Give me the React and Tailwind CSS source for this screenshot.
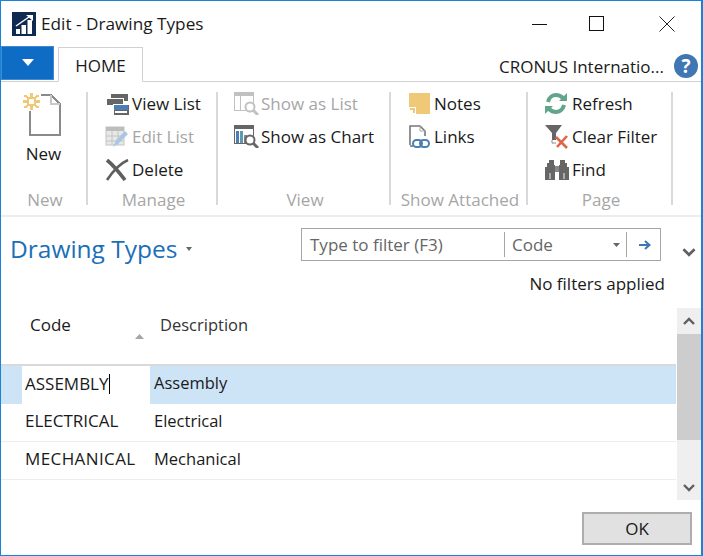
import React from 'react';

const ActionRow = ({ icon, label, disabled, iconWidth = 'w-[27px]' }) => (
    <div className={`h-[33px] flex items-center ${disabled ? 'text-[#a6a6a6]' : 'text-[#1a1a1a]'}`}>
        <span className={`${iconWidth} h-[24px] flex items-center shrink-0`}>{icon}</span>
        <span className="whitespace-nowrap">{label}</span>
    </div>
);

const RibbonGroup = ({ label, width, pad, children }) => (
    <div className="relative flex flex-col h-full shrink-0" style={{ width }}>
        <div className={`h-[102px] pt-[5px] ${pad}`}>{children}</div>
        <div className="h-[31px] text-center text-[#a6a6a6] pl-[1px] leading-[32px] whitespace-nowrap">{label}</div>
        <div className="absolute right-0 top-[10px] h-[113px] w-[2px] bg-[#d9d9d9]" />
    </div>
);

const NewIcon = () => (
    <svg width="42" height="46" viewBox="0 0 42 46" shapeRendering="crispEdges">
        <path d="M9 3H30L39 12V43H9Z" fill="#fff" stroke="#8a8a8a" strokeWidth="2" />
        <path d="M30 3V12H39" fill="none" stroke="#c8c8c8" strokeWidth="2" />
        <rect x="1" y="0" width="19" height="19" fill="#fff" />
        <g fill="#efc878">
            <rect x="9" y="1" width="3" height="5" />
            <rect x="9" y="13" width="3" height="5" />
            <rect x="2" y="8" width="5" height="3" />
            <rect x="14" y="8" width="5" height="3" />
            <path d="M3 3H6V4H7V5H8V7H6V6H5V5H3ZM15 3H18V5H16V6H15V7H13V5H14V4H15ZM6 12H8V14H7V15H6V16H3V14H5V13H6ZM13 12H15V13H16V14H18V16H15V15H14V14H13Z" />
        </g>
        <rect x="7" y="6" width="7" height="7" fill="none" stroke="#efc878" strokeWidth="2" />
    </svg>
);

const ViewListIcon = () => (
    <svg width="24" height="22" viewBox="0 0 24 22" shapeRendering="crispEdges">
        <rect x="6" y="1" width="17" height="7" fill="#666" />
        <rect x="1" y="5" width="17" height="7" fill="#666" stroke="#fff" />
        <rect x="8" y="11" width="16" height="11" fill="#666" stroke="#fff" />
        <rect x="9" y="12" width="14" height="5" fill="#4a7fb5" />
        <rect x="10" y="18" width="12" height="2" fill="#fff" />
    </svg>
);

const EditListIcon = () => (
    <svg width="24" height="22" viewBox="0 0 24 22">
        <rect x="1" y="1" width="18" height="18" fill="#e8e8e8" stroke="#c4c4c4" />
        <rect x="1" y="1" width="18" height="4" fill="#bdbdbd" />
        <path d="M7 5V19M13 5V19M1 10H19M1 15H19" stroke="#c4c4c4" fill="none" />
        <path d="M8 21L11 14L20 5L23 8L14 17Z" fill="#a9c6e3" />
    </svg>
);

const DeleteIcon = () => (
    <svg width="24" height="22" viewBox="0 0 24 22">
        <path d="M2 1C8 6 14 13 20 21" stroke="#5f5f5f" strokeWidth="3.6" fill="none" />
        <path d="M23 1C16 4 8 12 2 21" stroke="#5f5f5f" strokeWidth="2.6" fill="none" />
    </svg>
);

const ChartListIcon = ({ dim }) => (
    <svg width="25" height="23" viewBox="0 0 25 23" shapeRendering="crispEdges" className={dim ? 'opacity-40' : ''}>
        <rect x="0" y="0" width="19" height="18" fill="#fff" stroke="#666" />
        <rect x="0" y="0" width="19" height="4" fill="#666" />
        {dim ? (
            <path d="M6.5 4V18" stroke="#666" fill="none" />
        ) : (
            <g>
                <rect x="2" y="6" width="3" height="12" fill="#4a7fb5" />
                <rect x="6" y="6" width="3" height="12" fill="#5d9bb0" />
                <rect x="10" y="10" width="3" height="8" fill="#888" />
            </g>
        )}
        <circle cx="16" cy="15" r="4.5" fill="#fff" stroke="#666" strokeWidth="2" shapeRendering="auto" />
        <path d="M19 18L24 23" stroke="#666" strokeWidth="3" shapeRendering="auto" />
    </svg>
);

const NotesIcon = () => (
    <svg width="21" height="21" viewBox="0 0 21 21" shapeRendering="crispEdges">
        <path d="M0 0H21V21H7V14H0Z" fill="#efc878" />
        <path d="M1 15H6V20H4V17H1Z" fill="#efc878" />
    </svg>
);

const LinksIcon = () => (
    <svg width="21" height="23" viewBox="0 0 21 23">
        <path d="M1 20V1H11L16 6V11" fill="none" stroke="#777" strokeWidth="1.6" />
        <path d="M1 21H4" stroke="#777" strokeWidth="1.6" />
        <path d="M11 1V6H16" fill="none" stroke="#aaa" />
        <rect x="4" y="15" width="9" height="7" rx="3.5" fill="none" stroke="#4a7fb5" strokeWidth="2" />
        <rect x="11" y="15" width="9" height="7" rx="3.5" fill="none" stroke="#4a7fb5" strokeWidth="2" />
    </svg>
);

const RefreshIcon = () => (
    <svg width="22" height="23" viewBox="0 0 22 23">
        <path d="M3 10C4 5 8 3 11 3C14 3 16 4 18 6" fill="none" stroke="#62a58c" strokeWidth="4" />
        <path d="M14 9H22V1Z" fill="#62a58c" />
        <path d="M19 13C18 18 14 20 11 20C8 20 6 19 4 17" fill="none" stroke="#62a58c" strokeWidth="4" />
        <path d="M8 14H0V22Z" fill="#62a58c" />
    </svg>
);

const ClearFilterIcon = () => (
    <svg width="24" height="24" viewBox="0 0 24 24">
        <path d="M0 0H17L11 8V15H7V8Z" fill="#666" />
        <path d="M7 15V18H11" fill="none" stroke="#888" />
        <path d="M11 12L22 23M22 11L12 22" stroke="#e0664a" strokeWidth="2.6" fill="none" />
    </svg>
);

const FindIcon = () => (
    <svg width="24" height="20" viewBox="0 0 24 20" shapeRendering="crispEdges">
        <path d="M4 0H9V5H10V12H0V7H2V3H4Z" fill="#666" />
        <path d="M15 0H20V3H22V7H24V12H14V5H15Z" fill="#666" />
        <rect x="0" y="11" width="10" height="9" fill="#666" />
        <rect x="14" y="11" width="10" height="9" fill="#666" />
        <rect x="10" y="6" width="4" height="6" fill="#888" />
        <rect x="4" y="13" width="2" height="6" fill="#aaa" />
        <rect x="18" y="13" width="2" height="6" fill="#aaa" />
    </svg>
);

const Logo = () => (
    <svg width="24" height="24" viewBox="0 0 24 24" className="shrink-0">
        <rect width="24" height="24" fill="#0e2a50" />
        <path d="M4 22V17H8V22ZM9.500 22V13H14V22ZM15.500 22V8H20V22Z" fill="#fff" />
        <path d="M4 14L17 5" stroke="#fff" strokeWidth="1.5" />
        <path d="M14 3H21V9Z" fill="#fff" />
    </svg>
);

const Chevron = ({ up, className }) => (
    <svg width="12" height="9" viewBox="0 0 12 9" className={className}>
        <path d={up ? 'M1 7L6 2L11 7' : 'M1 2L6 7L11 2'} fill="none" stroke="#5f5f5f" strokeWidth="2.4" />
    </svg>
);

const Row = ({ code, description, selected, bottomLine, codeClass }) => (
    <div className={`h-[38px] grid grid-cols-[21px_128px_1fr] ${bottomLine ? 'border-b border-[#ededed]' : ''} ${selected ? 'bg-[#cde4f7]' : ''}`}>
        <div />
        <div className={`flex items-center pl-[3px] pb-[3px] whitespace-nowrap ${selected ? 'bg-white' : ''}`}>
            <span className={codeClass}>{code}</span>
            {selected && <span className="w-px h-[20px] bg-black" />}
        </div>
        <div className="flex items-center pl-[4px] pb-[3px] text-[16.500px]">{description}</div>
    </div>
);

export default function App() {
    return (
        <div className="w-[703px] h-[556px] bg-white border border-[#1883d7] border-r-2 overflow-hidden flex flex-col font-['Open_Sans','Noto_Sans',sans-serif] text-[17px] text-[#1a1a1a]">
            {/* title bar */}
            <div className="h-[46px] flex items-center shrink-0 pl-[11px]">
                <Logo />
                <span className="ml-[5px] text-[17.200px] whitespace-nowrap">Edit - Drawing Types</span>
                <div className="ml-auto flex items-center">
                    <svg width="16" height="16" viewBox="0 0 16 16" className="mr-[41px]" shapeRendering="crispEdges">
                        <path d="M0 8H15" stroke="#111" />
                    </svg>
                    <svg width="16" height="16" viewBox="0 0 16 16" className="mr-[54px]" shapeRendering="crispEdges">
                        <rect x="0.5" y="0.5" width="14" height="14" fill="none" stroke="#111" />
                    </svg>
                    <svg width="16" height="16" viewBox="0 0 16 16" className="mr-[26px]">
                        <path d="M0.5 0.5L15.5 15.5M15.5 0.5L0.5 15.5" stroke="#222" />
                    </svg>
                </div>
            </div>

            {/* tab strip */}
            <div className="h-[35px] flex items-end shrink-0 border-b border-[#d0d0d0] relative">
                <div className="w-[53px] h-[34px] mb-[1px] mr-[4px] bg-[#0f6cc4] border border-[#3f8ad2] flex items-center justify-center">
                    <svg width="12" height="8" viewBox="0 0 12 8"><path d="M0 0H12L6 7Z" fill="#fff" /></svg>
                </div>
                <div className="relative -mb-px w-[85px] h-[35px] border border-[#d0d0d0] border-b-white bg-white flex items-center justify-center pt-[2px]">HOME</div>
                <div className="ml-auto mb-[2px] flex items-center pr-[3px]">
                    <span className="whitespace-nowrap">CRONUS Internatio...</span>
                    <span className="ml-[10px] w-[24px] h-[24px] rounded-full bg-[#3f76b4] text-white font-bold text-[19px] flex items-center justify-center leading-none">?</span>
                </div>
            </div>

            {/* ribbon */}
            <div className="h-[135px] flex shrink-0 border-b-2 border-[#ededed]">
                <RibbonGroup label="New" width="87px">
                    <div className="flex flex-col items-center pr-[2px]">
                        <div className="h-[46px] mt-[5px] -ml-[3px]"><NewIcon /></div>
                        <span className="mt-[4px] leading-[24px]">New</span>
                    </div>
                </RibbonGroup>
                <RibbonGroup label="Manage" width="130px" pad="pl-[17px]">
                    <ActionRow icon={<ViewListIcon />} label="View List" />
                    <ActionRow icon={<EditListIcon />} label="Edit List" disabled />
                    <ActionRow icon={<DeleteIcon />} label="Delete" />
                </RibbonGroup>
                <RibbonGroup label="View" width="173px" pad="pl-[16px]">
                    <ActionRow icon={<ChartListIcon dim />} label="Show as List" disabled />
                    <ActionRow icon={<ChartListIcon />} label="Show as Chart" />
                </RibbonGroup>
                <RibbonGroup label="Show Attached" width="137px" pad="pl-[18px]">
                    <ActionRow icon={<NotesIcon />} label="Notes" iconWidth="w-[25px]" />
                    <ActionRow icon={<LinksIcon />} label="Links" iconWidth="w-[25px]" />
                </RibbonGroup>
                <RibbonGroup label="Page" width="145px" pad="pl-[17px]">
                    <ActionRow icon={<RefreshIcon />} label="Refresh" />
                    <ActionRow icon={<ClearFilterIcon />} label="Clear Filter" />
                    <ActionRow icon={<FindIcon />} label="Find" />
                </RibbonGroup>
            </div>

            {/* page header + filter */}
            <div className="h-[90px] shrink-0 flex pl-[9px]">
                <div className="pt-[13px] flex items-start w-[291px]">
                    <span className="text-[#1a6fb8] text-[24.500px] leading-[37px] whitespace-nowrap">Drawing Types</span>
                    <svg width="6" height="4" viewBox="0 0 6 4" className="ml-[9px] mt-[17px]"><path d="M0 0H6L3 4Z" fill="#666" /></svg>
                </div>
                <div className="flex flex-col items-end w-[364px] pt-[11px]">
                    <div className="w-[360px] self-start h-[33px] border border-[#a6a6a6] flex items-center text-[#666]">
                        <span className="w-[203px] h-[25px] pl-[8px] border-r border-[#a6a6a6] leading-[25px] whitespace-nowrap">Type to filter (F3)</span>
                        <span className="w-[122px] h-[25px] pl-[7px] border-r border-[#a6a6a6] leading-[25px] relative">
                            Code
                            <svg width="7" height="4" viewBox="0 0 7 4" className="absolute right-[6px] top-[11px]"><path d="M0 0H7L3.5 4Z" fill="#666" /></svg>
                        </span>
                        <svg width="12" height="10" viewBox="0 0 12 10" className="ml-[12px]">
                            <path d="M0 5H10M6 1L10.500 5L6 9" fill="none" stroke="#3f76b4" strokeWidth="2" />
                        </svg>
                    </div>
                    <div className="mt-[11px] leading-[24px] whitespace-nowrap">No filters applied</div>
                </div>
                <Chevron className="ml-[17px] mt-[30px] w-[14px] h-[10px]" />
            </div>

            {/* list */}
            <div className="h-[193px] shrink-0 flex">
                <div className="w-[675px] shrink-0">
                    <div className="h-[59px] border-b-2 border-[#d9d9d9] flex relative">
                        <span className="ml-[29px] mt-[6px] leading-[24px]">Code</span>
                        <svg width="9" height="5" viewBox="0 0 9 5" className="absolute left-[134px] top-[27px]"><path d="M0 5H9L4.500 0Z" fill="#a6a6a6" /></svg>
                        <span className="absolute left-[159px] top-[6px] leading-[24px] text-[16.500px] text-[#333]">Description</span>
                    </div>
                    <Row code="ASSEMBLY" description="Assembly" selected />
                    <Row code="ELECTRICAL" description="Electrical" bottomLine />
                    <Row code="MECHANICAL" description="Mechanical" bottomLine codeClass="tracking-[0.4px]" />
                </div>
                <div className="ml-[1px] mt-[1px] w-[24px] bg-[#efefef] flex flex-col items-center">
                    <div className="h-[26px] flex items-center justify-center"><Chevron up /></div>
                    <div className="h-[106px] w-full bg-[#cdcdcd]" />
                    <div className="flex-1 flex items-end justify-center pb-[8px]"><Chevron /></div>
                </div>
            </div>

            {/* footer */}
            <div className="flex-1 flex justify-end items-start pt-[12px] pr-[9px]">
                <button className="w-[110px] h-[33px] bg-[#e1e1e1] border-2 border-[#adadad] flex items-center justify-center">OK</button>
            </div>
        </div>
    );
}
